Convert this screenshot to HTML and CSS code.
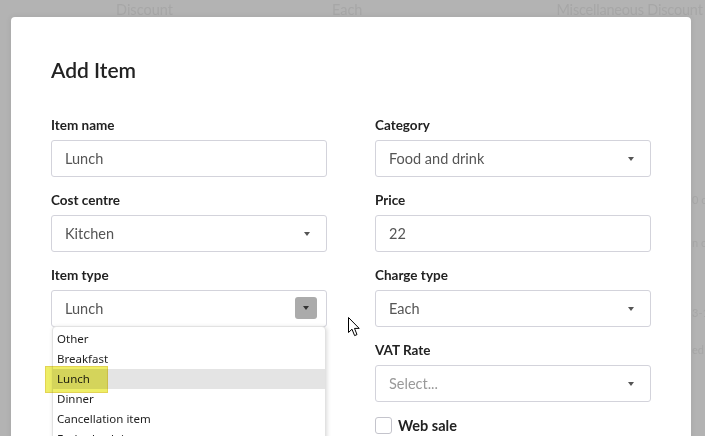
FILE: index.html
```
<!DOCTYPE html>
<html>
    <head>
        <meta charset="utf-8">
        <meta name="viewport" content="width=device-width, initial-scale=1.0">
        <title>Add Item</title>
        <link rel="stylesheet" href="styles.css">
    </head>
    <body>
        <div class="page">
            <div class="page-head">
                <span class="head-discount">Discount</span>
                <span class="head-each">Each</span>
                <span class="head-misc">Miscellaneous Discount</span>
            </div>
            <div class="page-side">
                <div class="side-line l1">0 c</div>
                <div class="side-line l2">n c</div>
                <div class="side-line l3">3-1</div>
                <div class="side-line l4">ed</div>
            </div>
        </div>

        <div class="overlay">
            <div class="modal">
                <h2 class="modal-title">Add Item</h2>
                <div class="form">
                    <div class="col">
                        <div class="field">
                            <label>Item name</label>
                            <div class="input">Lunch</div>
                        </div>
                        <div class="field">
                            <label>Cost centre</label>
                            <div class="input select">Kitchen<span class="caret"></span></div>
                        </div>
                        <div class="field open">
                            <label>Item type</label>
                            <div class="input select">Lunch<span class="btn-caret"><span class="caret dark"></span></span></div>
                            <ul class="dropdown">
                                <li>Other</li>
                                <li>Breakfast</li>
                                <li class="hover">Lunch</li>
                                <li>Dinner</li>
                                <li>Cancellation item</li>
                                <li>Early check-in</li>
                            </ul>
                            <div class="marker"></div>
                        </div>
                    </div>
                    <div class="col">
                        <div class="field">
                            <label>Category</label>
                            <div class="input select">Food and drink<span class="caret"></span></div>
                        </div>
                        <div class="field">
                            <label>Price</label>
                            <div class="input">22</div>
                        </div>
                        <div class="field">
                            <label>Charge type</label>
                            <div class="input select">Each<span class="caret"></span></div>
                        </div>
                        <div class="field">
                            <label>VAT Rate</label>
                            <div class="input select placeholder">Select...<span class="caret"></span></div>
                        </div>
                        <div class="check">
                            <span class="box"></span>
                            <span class="check-label">Web sale</span>
                        </div>
                    </div>
                </div>
            </div>
            <svg class="cursor" width="13" height="20" viewBox="0 0 13 20">
                <path d="M0.5 0.5 L0.5 15.5 L4 12.2 L6.6 18.6 L9 17.6 L6.5 11.4 L11.2 11.4 Z" fill="#fff" stroke="#000" stroke-width="1" stroke-linejoin="round"/>
            </svg>
        </div>
    </body>
</html>
```

FILE: styles.css
```
html, body{
    margin: 0;
    height: 100%;
    overflow: hidden;
}
body{
    background: #b3b3b3;
    font-family: Lato, "Noto Sans", sans-serif;
    position: relative;
}

/* content under the overlay */
.page{
    color: #a7a7a7;
    font-size: 14.5px;
}
.page-head{
    display: flex;
    height: 20px;
    line-height: 20px;
}
.head-discount{
    margin-left: 116px;
}
.head-each{
    margin-left: 159px;
}
.head-misc{
    margin-left: 194px;
    white-space: nowrap;
    letter-spacing: -0.2px;
}
.page-side{
    padding-left: 692px;
    white-space: nowrap;
    font-size: 11px;
}
.side-line{
    height: 20px;
    line-height: 20px;
}
.l1{ margin-top: 170px; }
.l2{ margin-top: 23px; }
.l3{ margin-top: 50px; }
.l4{ margin-top: 17px; }

/* modal */
.overlay{
    position: absolute;
    inset: 0;
}
.modal{
    position: absolute;
    left: 11px;
    top: 17px;
    width: 680px;
    height: 460px;
    box-sizing: border-box;
    padding: 40px 40px 0 40px;
    background: #fff;
    border-radius: 4px;
    box-shadow: 0 0 6px rgba(0,0,0,0.08);
}
.modal-title{
    margin: 0 0 34px 0;
    font-size: 21px;
    line-height: 26px;
    font-weight: 600;
    color: #222;
}
.form{
    display: grid;
    grid-template-columns: 276px 276px;
    column-gap: 48px;
}
.field{
    position: relative;
    margin-bottom: 15px;
}
.field label{
    display: block;
    font-size: 13.5px;
    line-height: 16px;
    font-weight: 700;
    color: #222;
    margin-bottom: 7px;
}
.input{
    position: relative;
    height: 37px;
    box-sizing: border-box;
    border: 1px solid #d3d3db;
    border-radius: 3px;
    padding-left: 13px;
    line-height: 35px;
    font-size: 14.5px;
    color: #555;
}
.placeholder{
    color: #999;
}
.caret{
    position: absolute;
    right: 16px;
    top: 16px;
    width: 0;
    height: 0;
    border-left: 3.5px solid transparent;
    border-right: 3.5px solid transparent;
    border-top: 4px solid #555;
}
.btn-caret{
    position: absolute;
    right: 9px;
    top: 6px;
    width: 22px;
    height: 22px;
    background: #ababab;
    border-radius: 3px;
}
.caret.dark{
    right: 8px;
    top: 9px;
    border-top-color: #333;
}

/* native-looking dropdown list */
.dropdown{
    position: absolute;
    left: 1px;
    top: 59px;
    width: 274px;
    height: 130px;
    margin: 0;
    padding: 2px 0 0 0;
    list-style: none;
    box-sizing: border-box;
    background: #fff;
    border: 1px solid #e2e2e2;
    border-radius: 4px 4px 0 0;
    box-shadow: 1px 1px 4px rgba(0,0,0,0.15);
    overflow: hidden;
    font-family: "Noto Sans", "Open Sans", sans-serif;
    font-size: 11.5px;
    color: #1e1e1e;
}
.dropdown li{
    height: 20px;
    line-height: 20px;
    padding-left: 4px;
    white-space: nowrap;
}
.dropdown li.hover{
    background: #e4e4e4;
}
.marker{
    position: absolute;
    left: -6px;
    top: 99px;
    width: 63px;
    height: 27px;
    box-sizing: border-box;
    background: #eded55;
    border: 1px solid #e0d040;
    mix-blend-mode: multiply;
    opacity: 0.9;
}

.check{
    display: flex;
    align-items: center;
    gap: 6px;
    margin-top: 4px;
}
.box{
    width: 17px;
    height: 17px;
    box-sizing: border-box;
    border: 1px solid #c4c4cc;
    border-radius: 3px;
}
.check-label{
    font-size: 14.5px;
    font-weight: 700;
    color: #222;
}

.cursor{
    position: absolute;
    left: 348px;
    top: 317px;
}
```
